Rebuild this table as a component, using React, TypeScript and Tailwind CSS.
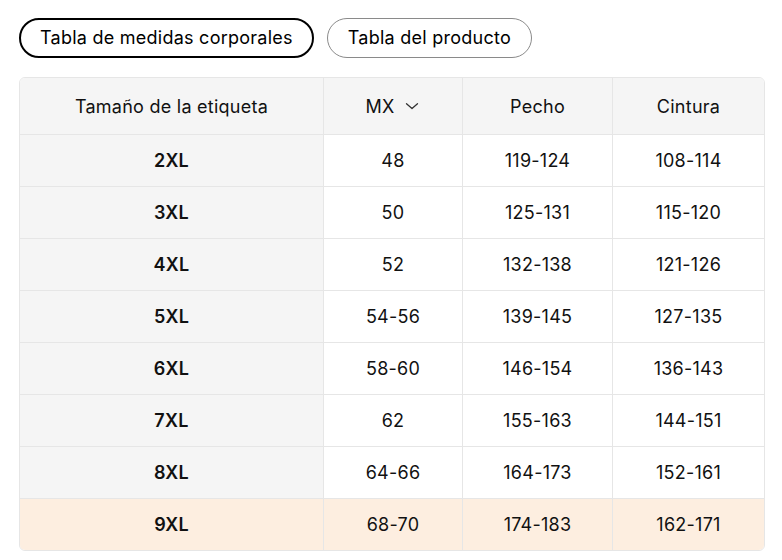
import React from "react";

const rows = [
  ["2XL", "48", "119-124", "108-114"],
  ["3XL", "50", "125-131", "115-120"],
  ["4XL", "52", "132-138", "121-126"],
  ["5XL", "54-56", "139-145", "127-135"],
  ["6XL", "58-60", "146-154", "136-143"],
  ["7XL", "62", "155-163", "144-151"],
  ["8XL", "64-66", "164-173", "152-161"],
  ["9XL", "68-70", "174-183", "162-171"],
];

export default function App() {
  return (
    <div
      className="w-[782px] h-[560px] bg-white text-[#111] overflow-hidden tracking-[0.25px]"
      style={{ fontFamily: "Inter, 'Noto Sans', sans-serif" }}
    >
      <div className="flex gap-[13px] pl-[19px] pt-[18px]">
        <button className="h-[40px] px-[19px] rounded-full border-2 border-black text-[18px] leading-none text-black bg-white">
          Tabla de medidas corporales
        </button>
        <button className="h-[40px] px-[20px] rounded-full border border-[#8a8a8a] text-[18px] leading-none text-black bg-white">
          Tabla del producto
        </button>
      </div>
      <div className="ml-[19px] mt-[19px] w-[746px] border border-[#e6e6e6] rounded-[6px] overflow-hidden">
        <div className="grid grid-cols-[304px_139px_150px_151px] h-[56px] bg-[#f5f5f5] text-[18px]">
          <div className="flex items-center justify-center border-r border-[#e6e6e6]">Tamaño de la etiqueta</div>
          <div className="flex items-center justify-center gap-[10px] border-r border-[#e6e6e6] pr-[2px]">
            <span>MX</span>
            <svg width="14" height="8" viewBox="0 0 14 8" fill="none">
              <path d="M1.5 1.8l5.5 4.8 5.5-4.8" stroke="#333" strokeWidth="1.3" strokeLinecap="round" strokeLinejoin="round" />
            </svg>
          </div>
          <div className="flex items-center justify-center border-r border-[#e6e6e6]">Pecho</div>
          <div className="flex items-center justify-center">Cintura</div>
        </div>
        {rows.map((r, i) => {
          const last = i === rows.length - 1;
          return (
            <div
              key={r[0]}
              className={`grid grid-cols-[304px_139px_150px_151px] h-[52px] text-[18px] border-t border-[#e6e6e6] ${last ? "bg-[#fdeee0]" : "bg-white"}`}
            >
              <div className={`flex items-center justify-center font-semibold border-r border-[#e6e6e6] ${last ? "" : "bg-[#f5f5f5]"}`}>{r[0]}</div>
              <div className="flex items-center justify-center border-r border-[#e6e6e6]">{r[1]}</div>
              <div className="flex items-center justify-center border-r border-[#e6e6e6]">{r[2]}</div>
              <div className="flex items-center justify-center">{r[3]}</div>
            </div>
          );
        })}
      </div>
    </div>
  );
}
